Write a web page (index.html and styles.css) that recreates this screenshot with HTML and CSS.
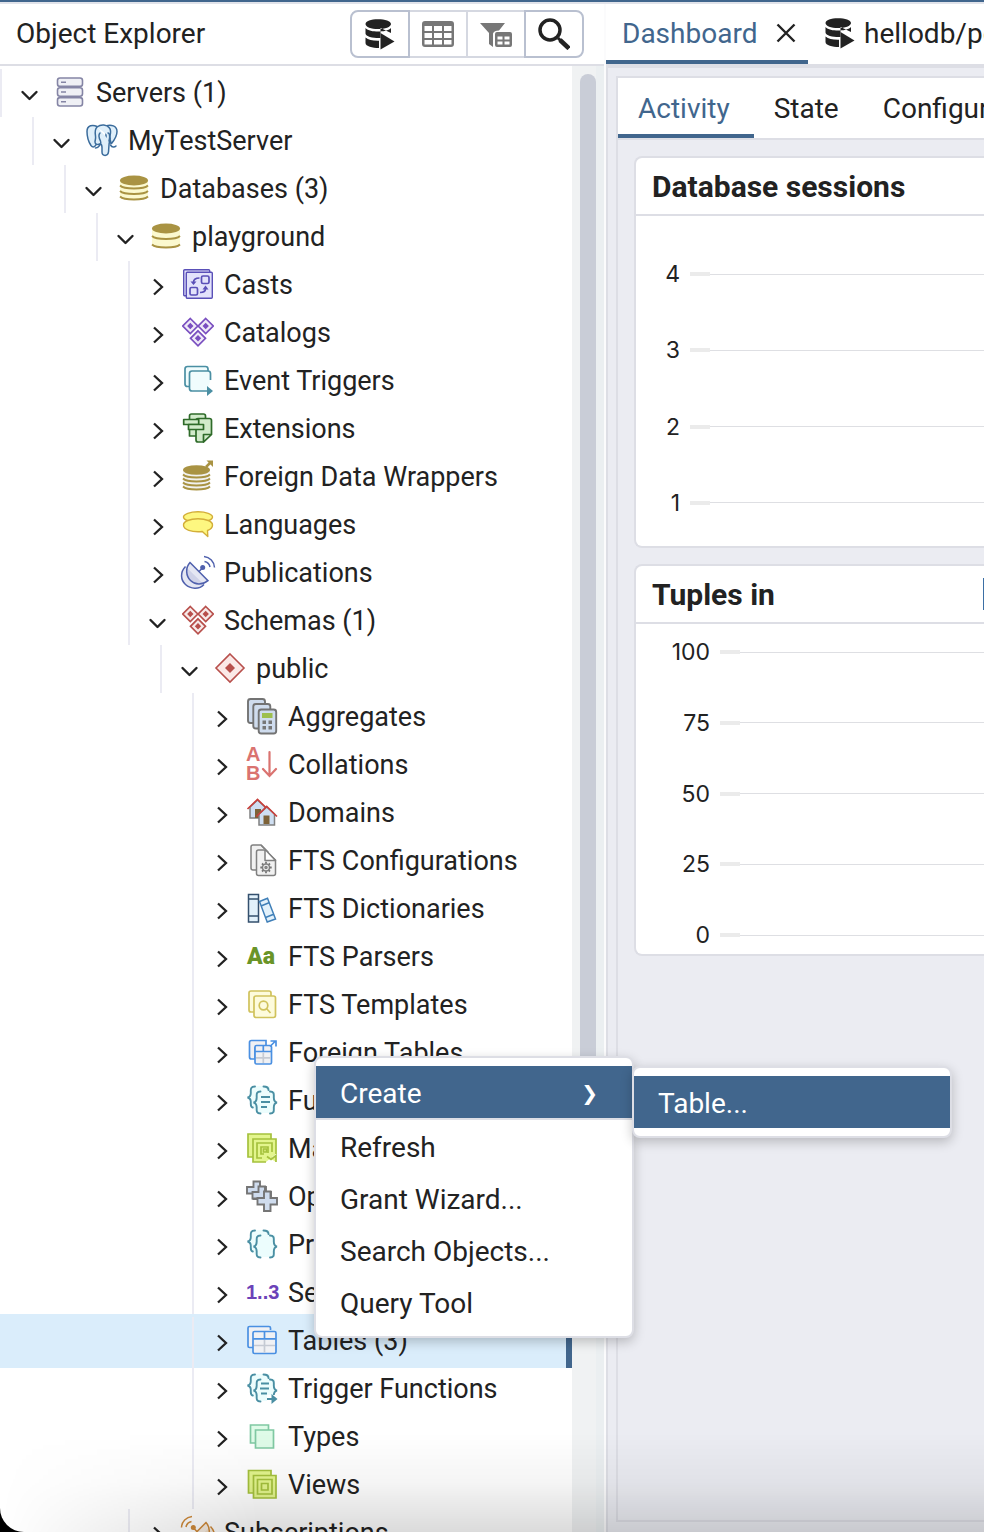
FILE: index.html
```html
<!DOCTYPE html>
<html lang="en">
<head>
<meta charset="utf-8">
<title>Object Explorer</title>
<link rel="stylesheet" href="styles.css">
</head>
<body>
<svg class="sprite" aria-hidden="true">
  <symbol id="open" viewBox="0 0 28 32"><path d="M6.500 16l7 7 7-7" fill="none" stroke="#222" stroke-width="2.400" stroke-linecap="round" stroke-linejoin="round"/></symbol>
  <symbol id="closed" viewBox="0 0 28 32"><path d="M10 11.500l8 7.500-8 7.500" fill="none" stroke="#222" stroke-width="2.300"/></symbol>
  <symbol id="diamonds" viewBox="0 0 32 32"><g stroke="currentColor" stroke-width="1.700"><path d="M8.300 2.500l7.500 7.500-7.500 7.500-7.500-7.500zM23.700 2.500l7.500 7.500-7.500 7.500-7.500-7.500zM16 14.800l7.500 7.500-7.500 7.500-7.500-7.500z" fill="currentColor" fill-opacity=".12"/></g><path d="M8.300 6.800l3.200 3.200-3.200 3.200-3.200-3.200zM23.700 6.800l3.200 3.200-3.200 3.200-3.200-3.200zM16 19.100l3.200 3.200-3.200 3.200-3.200-3.200z" fill="currentColor"/></symbol>
  <symbol id="dish" viewBox="0 0 32 32" overflow="visible"><g fill="none" stroke="currentColor" stroke-width="1.500"><path d="M3.500 10.500C-2 16-1.500 24 3.500 28.500S17 34 22 28.500" fill="currentColor" fill-opacity=".15"/><path d="M8 6.500L26 24.700C20 29.500 13 29 8.500 24.500S3 12 8 6.500z" fill="currentColor" fill-opacity=".15"/><path d="M17 15.500l4-4M22.500 5.500a7 7 0 0 1 5.500 5.500M22 .5a11.500 11.500 0 0 1 10.500 11"/></g><circle cx="20.700" cy="11.500" r="2.500" fill="currentColor"/></symbol>
  <symbol id="braces" viewBox="0 0 32 32"><g fill="#ecfdfd" stroke="none"><path d="M7 2h17v5h5v22H12L6 24 3 13z"/></g><g fill="none" stroke="#4a8fa3" stroke-width="1.900" stroke-linecap="round"><path d="M9 2.500C4 2.500 4.800 6 4.800 9S4 13 1.500 13.500c2.500.5 3.300 1.500 3.300 4.500s-.5 5 2 5.500M17.500 2.500c3.500 0 5 1.500 5 3.500M14.500 7.500c-4.500 0-3.800 3-3.800 6s-.7 4.500-3.200 5c2.500.5 3.200 2 3.200 5s-.7 6 3.800 6M24 7.500c4.500 0 3.800 3 3.800 6s.7 4.500 3.200 5c-2.500.5-3.200 2-3.200 5s.7 6-3.800 6"/></g></symbol>
  <symbol id="query" viewBox="0 0 32 32"><path fill="#222" d="M1.500 6C1.500 3 7 1.300 14 1.300S27 3 27 6s-6 5-13 5S1.500 9 1.500 6zM1.500 10c2.500 2.800 7.500 3.500 12.500 3.500S24.500 12.800 27 10v5l-10.500-5V20C10.500 20.300 1.500 19 1.500 15.500zM1.500 19.500c3 2.500 7 3.300 13.500 3.200V30C8.500 30 1.500 28.500 1.500 25z"/><path fill="#222" d="M16.500 15l14 8.500-14 8z"/></symbol>
</svg>

<div class="app">
  <div class="workspace">
    <aside class="explorer">
      <header class="explorer-head">
        <h1>Object Explorer</h1>
        <div class="tools">
          <button class="tool" aria-label="Query Tool"><svg viewBox="0 0 32 32"><use href="#query"/></svg></button>
          <button class="tool" disabled aria-label="View Data"><svg viewBox="0 0 32 32"><path fill="#777" fill-rule="evenodd" d="M3 3h26q3 0 3 3v20q0 3-3 3H3q-3 0-3-3V6q0-3 3-3zM2.500 8v5h7.500V8zM12 8v5h8V8zM22 8v5h7.500V8zM2.500 15v5h7.500v-5zM12 15v5h8v-5zM22 15v5h7.500v-5zM2.500 22v4.500h7.500V22zM12 22v4.500h8V22zM22 22v4.500h7.500V22z"/></svg></button>
          <button class="tool" disabled aria-label="Filtered Rows"><svg viewBox="0 0 32 32"><path fill="#777" d="M0 5h25l-6 7.500q-5 0-6 3V29l-4-3V15z"/><path fill="#777" fill-rule="evenodd" d="M17 14h13q2 0 2 2v11q0 2-2 2H17q-2 0-2-2V16q0-2 2-2zM17.500 18.500v3h5v-3zM24.500 18.500v3h5v-3zM17.500 23.500v3h5v-3zM24.500 23.500v3h5v-3z"/></svg></button>
          <button class="tool" aria-label="Search Objects"><svg viewBox="0 0 32 32"><g fill="none" stroke="#222"><circle cx="12" cy="12" r="10" stroke-width="3.500"/><path d="M20 20l2.500 2.500" stroke-width="3"/><path d="M22 22l9 8.500" stroke-width="4.500"/></g></svg></button>
        </div>
      </header>
      <div class="explorer-body">
        <ul class="tree">
          <li class="row l0"><div class="node"><button class="toggle" aria-label="Collapse"><svg><use href="#open"/></svg></button><svg class="icon" viewBox="0 0 32 32"><g fill="#eff0f5" stroke="#8585a5" stroke-width="1.600"><rect x="3.500" y="2" width="25" height="8.400" rx="2.500"/><rect x="3.500" y="11.800" width="25" height="8.400" rx="2.500"/><rect x="3.500" y="21.600" width="25" height="8.400" rx="2.500"/><path d="M7 6.200h5M7 16h5M7 25.800h5"/></g></svg><span>Servers (1)</span></div></li>
          <li class="row l1"><div class="node"><button class="toggle" aria-label="Collapse"><svg><use href="#open"/></svg></button><svg class="icon" viewBox="0 0 32 32"><g fill="#dfeffa" stroke="#3b6c9c" stroke-width="1.500" stroke-linejoin="round" stroke-linecap="round"><path d="M11 2.500C7 .5 1 1 1 7.500c0 5 2 11 4 14 1.500 2 3 2 4.500 0l2-3z"/><path d="M20 2c5-2 11 0 11 5.500 0 4-3 9-5.500 12L20 16z"/><path d="M11 3c4-3 10-2.500 12.500 1 1.500 2 1 6 .5 8-.5 3 .5 5 1 6.500M11 3c-2 2-2 6-1.500 9s-.5 4-.5 6 2 3 5 2c1 0 2 1 2 3.500V28c0 4.500 6 4.500 6.500 0l.5-7c0-4 2-5 1-8"/><path d="M14 9c-2 2-1 5 .5 8 1 2 0 3-1 4.500S10.500 24 9.500 24M22 9c2 0 2 5 1 8M24.500 21c1.500 2.500 4 2.500 5.500 1" fill="none"/></g></svg><span>MyTestServer</span></div></li>
          <li class="row l2"><div class="node"><button class="toggle" aria-label="Collapse"><svg><use href="#open"/></svg></button><svg class="icon" viewBox="0 0 32 32"><path d="M2 9v15.500c4 4.500 24 4.500 28 0V9z" fill="#fbf9cf"/><ellipse cx="16" cy="8.500" rx="14" ry="5" fill="#a99343"/><path d="M2 13.500c4 4 24 4 28 0M2 19c4 4 24 4 28 0M2 24.500c4 4 24 4 28 0" fill="none" stroke="#a99343" stroke-width="1.800"/></svg><span>Databases (3)</span></div></li>
          <li class="row l3"><div class="node"><button class="toggle" aria-label="Collapse"><svg><use href="#open"/></svg></button><svg class="icon" viewBox="0 0 32 32"><path d="M2 9v15.500c4 4.500 24 4.500 28 0V9z" fill="#fbf9cf"/><ellipse cx="16" cy="8.500" rx="14" ry="5" fill="#a99343"/><path d="M2 16c4 4 24 4 28 0M2 24.500c4 4 24 4 28 0" fill="none" stroke="#a99343" stroke-width="1.800"/></svg><span>playground</span></div></li>
          <li class="row l4"><div class="node"><button class="toggle" aria-label="Expand"><svg><use href="#closed"/></svg></button><svg class="icon" viewBox="0 0 32 32"><g fill="#e3e3fb" stroke="#5a50b8" stroke-width="1.400"><rect x="1.700" y="1.700" width="26" height="26" rx="1"/><rect x="4.300" y="4.300" width="26" height="26" rx="1"/><g stroke-width="1.700"><rect x="19.500" y="8" width="7.500" height="7.500" rx="1.500"/><rect x="8" y="19.500" width="7.500" height="7.500" rx="1.500"/><path d="M17.500 10c-4 0-6 1-6 4.500M18 24.500c4 0 5.500-1 5.500-4" fill="none"/></g></g><path d="M8.500 13.500h6l-3 3.500zM20.500 21.500h6l-3-4z" fill="#5a50b8"/></svg><span>Casts</span></div></li>
          <li class="row l4"><div class="node"><button class="toggle" aria-label="Expand"><svg><use href="#closed"/></svg></button><svg class="icon violet"><use href="#diamonds"/></svg><span>Catalogs</span></div></li>
          <li class="row l4"><div class="node"><button class="toggle" aria-label="Expand"><svg><use href="#closed"/></svg></button><svg class="icon" viewBox="0 0 32 32"><g fill="#f0fcfd" stroke="#4a8fa3" stroke-width="1.700"><path d="M7.500 22.500H5.500q-2.500 0-2.500-2.500V5q0-2.500 2.500-2.500h18q2.500 0 2.500 2.500v2"/><path d="M25 27H10q-2.500 0-2.500-2.500V9.500Q7.500 7 10 7h16q2.500 0 2.500 2.500V16"/></g><path d="M25 22l6 5-6 5z" fill="#4a8fa3"/></svg><span>Event Triggers</span></div></li>
          <li class="row l4"><div class="node"><button class="toggle" aria-label="Expand"><svg><use href="#closed"/></svg></button><svg class="icon" viewBox="0 0 32 32"><g fill="#d2ebcb" stroke="#2f6b2a" stroke-width="1.700" stroke-linejoin="round"><path d="M7.500 24V4q0-2 2-2h12q2 0 2 2v20z"/><path d="M14 28V8.500q0-2 2-2h11.500q2 0 2 2V22l-8 8H16q-2 0-2-2z"/><path d="M21.500 30v-7.500h8z"/><rect x="1.700" y="7.500" width="15" height="5"/><rect x="6.500" y="12.500" width="15" height="5"/></g></svg><span>Extensions</span></div></li>
          <li class="row l4"><div class="node"><button class="toggle" aria-label="Expand"><svg><use href="#closed"/></svg></button><svg class="icon" viewBox="0 0 32 32"><path d="M1 11v15c4 5 24 5 27 0V11z" fill="#f1f1ee"/><ellipse cx="14.500" cy="10" rx="13.500" ry="4.800" fill="#a99343"/><path d="M1 14.500c4 4 23 4 27 0M1 18.500c4 4 23 4 27 0M1 22.500c4 4 23 4 27 0M1 26.500c4 4 23 4 27 0" fill="none" stroke="#a99343" stroke-width="1.800"/><path d="M24 7l5-5" stroke="#a99343" stroke-width="2.500"/><path d="M24.500.5H31V7z" fill="#a99343"/></svg><span>Foreign Data Wrappers</span></div></li>
          <li class="row l4"><div class="node"><button class="toggle" aria-label="Expand"><svg><use href="#closed"/></svg></button><svg class="icon" viewBox="0 0 32 32"><g fill="#fdf780" stroke="#d3ae39" stroke-width="1.400" stroke-linejoin="round"><ellipse cx="16" cy="9" rx="14.500" ry="5.200"/><path d="M16 10.800c8 0 14.500 2.500 14.500 6.200 0 2.500-2 4.500-5 5.500l.3 6-5.500-5c-11 1-18.800-2-18.800-6.500 0-3.700 6.500-6.200 14.500-6.200z"/></g></svg><span>Languages</span></div></li>
          <li class="row l4"><div class="node"><button class="toggle" aria-label="Expand"><svg><use href="#closed"/></svg></button><svg class="icon indigo"><use href="#dish"/></svg><span>Publications</span></div></li>
          <li class="row l4"><div class="node"><button class="toggle" aria-label="Collapse"><svg><use href="#open"/></svg></button><svg class="icon red"><use href="#diamonds"/></svg><span>Schemas (1)</span></div></li>
          <li class="row l5"><div class="node"><button class="toggle" aria-label="Collapse"><svg><use href="#open"/></svg></button><svg class="icon" viewBox="0 0 32 32"><path d="M16 2l14 14-14 14L2 16z" fill="#fbe9e7" stroke="#b8504c" stroke-width="1.600"/><path d="M16 11l5 5-5 5-5-5z" fill="#b8504c"/></svg><span>public</span></div></li>
          <li class="row l6"><div class="node"><button class="toggle" aria-label="Expand"><svg><use href="#closed"/></svg></button><svg class="icon" viewBox="0 0 32 32"><g fill="#cfdcee" stroke="#737373" stroke-width="1.900"><rect x="2" y="-1" width="17" height="24" rx="2.500"/><rect x="7.300" y="4" width="17" height="24.500" rx="2.500"/><rect x="12.700" y="9.500" width="17.500" height="24" rx="2.500"/></g><path d="M16 13h10.500v5H16z" fill="#9dbf4f"/><path d="M16.500 20.500h3.500v3.500h-3.500zM22.500 20.500H26v3.500h-3.500zM16.500 26h3.500v3.500h-3.500zM22.500 26H26v3.500h-3.500z" fill="#777"/></svg><span>Aggregates</span></div></li>
          <li class="row l6"><div class="node"><button class="toggle" aria-label="Expand"><svg><use href="#closed"/></svg></button><svg class="icon" viewBox="0 0 32 32"><g fill="#da7370"><text x="0" y="13" class="glyph-ab">A</text><text x="0" y="32" class="glyph-ab">B</text></g><path d="M23.500 4v23M17 21l6.500 7 6.500-7" fill="none" stroke="#da7370" stroke-width="2.200" stroke-linecap="round"/></svg><span>Collations</span></div></li>
          <li class="row l6"><div class="node"><button class="toggle" aria-label="Expand"><svg><use href="#closed"/></svg></button><svg class="icon" viewBox="0 0 32 32"><g fill="#cfdff2" stroke="#808080" stroke-width="1.500"><path d="M4 22V11l7.500-7L19 11v11z"/></g><path d="M9 13h6v9H9z" fill="#7d6238"/><path d="M1.500 13l10-9.500 10 9.500" fill="none" stroke="#c9403c" stroke-width="1.700"/><path d="M13 29V18l7.800-7 7.700 7v11z" fill="#cfdff2" stroke="#808080" stroke-width="1.500"/><path d="M17.500 19.500h6V28h-6z" fill="#7d6238"/><path d="M10.500 20.500l10.200-10 10.300 10" fill="none" stroke="#c9403c" stroke-width="1.700"/></svg><span>Domains</span></div></li>
          <li class="row l6"><div class="node"><button class="toggle" aria-label="Expand"><svg><use href="#closed"/></svg></button><svg class="icon" viewBox="0 0 32 32"><g fill="#f1f1f1" stroke="#808080" stroke-width="1.500" stroke-linejoin="round"><path d="M5 24V3q0-2 2-2h8l7 7v18H7q-2 0-2-2z"/><path d="M10.500 29V8q0-2 2-2H19l10.500 10v13.500q0 2-2 2h-15q-2 0-2-2z"/><path d="M15 1l14.500 15.500H19V6" fill="#fff"/><circle cx="20" cy="23.500" r="3.500"/><circle cx="20" cy="23.500" r="1"/></g><path d="M20 17.800v2M20 27.200v2M14.300 23.500h2M23.700 23.500h2M16 19.500l1.400 1.400M22.600 26.100l1.400 1.400M24 19.500l-1.400 1.400M17.400 26.100L16 27.500" stroke="#777" stroke-width="1.800"/></svg><span>FTS Configurations</span></div></li>
          <li class="row l6"><div class="node"><button class="toggle" aria-label="Expand"><svg><use href="#closed"/></svg></button><svg class="icon" viewBox="0 0 32 32"><g fill="#e2f1fb" stroke-width="1.500"><path d="M2.500 2.500h10v27.500h-10zM2.500 7h10M2.500 24h10" stroke="#34506e"/><path d="M13.500 9.500l8-3.300 8 20.800-8.300 3zM15 14l8-3.200M19.500 25.500l8.200-3.300" stroke="#3f7fb8"/></g></svg><span>FTS Dictionaries</span></div></li>
          <li class="row l6"><div class="node"><button class="toggle" aria-label="Expand"><svg><use href="#closed"/></svg></button><svg class="icon" viewBox="0 0 32 32"><text x="1" y="24" class="glyph-aa">Aa</text></svg><span>FTS Parsers</span></div></li>
          <li class="row l6"><div class="node"><button class="toggle" aria-label="Expand"><svg><use href="#closed"/></svg></button><svg class="icon" viewBox="0 0 32 32"><g fill="#fdfbdc" stroke="#d0c25c" stroke-width="1.700"><rect x="3" y="3" width="22" height="21" rx="2"/><rect x="8" y="8" width="21.500" height="21.500" rx="2"/><circle cx="17.500" cy="17.500" r="4.300"/><path d="M20.500 20.500l4 4.500"/></g></svg><span>FTS Templates</span></div></li>
          <li class="row l6"><div class="node"><button class="toggle" aria-label="Expand"><svg><use href="#closed"/></svg></button><svg class="icon" viewBox="0 0 32 32"><g fill="#f0f1f4" stroke="#4a90e2" stroke-width="1.700"><path d="M20 4.500H5.500q-2 0-2 2v14.500q0 2 2 2H9V12h11z"/><rect x="9" y="9.500" width="16.500" height="18.500" rx="1.500"/><path d="M9 15.500h16.500M17.300 10v6"/><path d="M10 21.800h14.500M17.300 16.500V27" stroke="#c5cad3"/><path d="M24 10.500l5-5M24.500 5h5.500v5.500" fill="none"/></g></svg><span>Foreign Tables</span></div></li>
          <li class="row l6"><div class="node"><button class="toggle" aria-label="Expand"><svg><use href="#closed"/></svg></button><svg class="icon" viewBox="0 0 32 32"><use href="#braces"/><path d="M15 13h9M15 18h9M15 23h6" stroke="#4a8fa3" stroke-width="1.800"/></svg><span>Functions</span></div></li>
          <li class="row l6"><div class="node"><button class="toggle" aria-label="Expand"><svg><use href="#closed"/></svg></button><svg class="icon" viewBox="0 0 32 32"><g fill="#e3f58d" stroke="#a5c13d" stroke-width="1.700"><path d="M2 2h23v23H2z"/><path d="M30 22V7H7v23h13"/><path d="M26 20v-9H11v15h5"/><path d="M22 21v-6h-7v7h3"/><path d="M17.500 17h3v3h-3z"/><path d="M21 24.500l4 3 5-4v6.500"/></g></svg><span>Materialized Views</span></div></li>
          <li class="row l6"><div class="node"><button class="toggle" aria-label="Expand"><svg><use href="#closed"/></svg></button><svg class="icon" viewBox="0 0 32 32"><g fill="#cfdcee" stroke="#757575" stroke-width="1.900"><path d="M7.500 1.500h6.500v5.500h6v6.500h-6V19H7.500v-5.500H1V7h6.500z"/><path d="M12.500 6.500H19V12h6v6.500h-6V24h-6.500v-5.500H6.500V12h6z"/><path d="M18 11.500h6.500V18H31v6.500h-6.500v6.500H18v-6.500h-6.500V18H18z"/></g></svg><span>Operators</span></div></li>
          <li class="row l6"><div class="node"><button class="toggle" aria-label="Expand"><svg><use href="#closed"/></svg></button><svg class="icon"><use href="#braces"/></svg><span>Procedures</span></div></li>
          <li class="row l6"><div class="node"><button class="toggle" aria-label="Expand"><svg><use href="#closed"/></svg></button><svg class="icon" viewBox="0 0 32 32"><text x="0" y="23" class="glyph-seq">1..3</text></svg><span>Sequences</span></div></li>
          <li class="row l6 selected"><div class="node"><button class="toggle" aria-label="Expand"><svg><use href="#closed"/></svg></button><svg class="icon" viewBox="0 0 32 32"><g fill="#f0f1f4" stroke="#4a90e2" stroke-width="1.700"><path d="M24.500 6V4q0-1.500-1.500-1.500H3.500Q2 2.500 2 4v18q0 1.500 1.500 1.500H7"/><rect x="7" y="7.500" width="23" height="22" rx="1.500"/><path d="M7 14.800h23M18.500 7.500v7"/><path d="M8 21.500h21M18.500 16v12.500" stroke="#c5cad3"/></g></svg><span>Tables (3)</span></div></li>
          <li class="row l6"><div class="node"><button class="toggle" aria-label="Expand"><svg><use href="#closed"/></svg></button><svg class="icon" viewBox="0 0 32 32"><use href="#braces"/><path d="M21 23h11v9H21z" fill="#fff"/><path d="M15 11.500h8M14 16.500h9M15 21.500h6M21 27h5" stroke="#4a8fa3" stroke-width="1.800"/><path d="M25.500 22l6 5-6 5z" fill="#4a8fa3"/></svg><span>Trigger Functions</span></div></li>
          <li class="row l6"><div class="node"><button class="toggle" aria-label="Expand"><svg><use href="#closed"/></svg></button><svg class="icon" viewBox="0 0 32 32"><g fill="#dffbe8" stroke="#80c9a3" stroke-width="1.700"><path d="M4.500 5h18v18h-18z"/><path d="M9.500 10h18v18h-18z"/></g></svg><span>Types</span></div></li>
          <li class="row l6"><div class="node"><button class="toggle" aria-label="Expand"><svg><use href="#closed"/></svg></button><svg class="icon" viewBox="0 0 32 32"><g fill="#e3f58d" stroke="#a5c13d" stroke-width="1.700"><path d="M2.500 2.500h22.500v22.500H2.500z"/><path d="M7.500 7.500H30V30H7.500z"/><path d="M11.500 11.500H26V26H11.500z"/><path d="M15.500 15.500H22V22h-6.500z"/></g></svg><span>Views</span></div></li>
          <li class="row l4"><div class="node"><button class="toggle" aria-label="Expand"><svg><use href="#closed"/></svg></button><svg class="icon orange flipped"><use href="#dish"/></svg><span>Subscriptions</span></div></li>
        </ul>
        <div class="scrollbar"><div class="thumb"></div></div>
      </div>
    </aside>

    <main class="main">
      <nav class="tabs">
        <a class="tab active" href="#dashboard">Dashboard <svg class="close" viewBox="0 0 20 20"><path d="M1.500 1.500l17 17M18.500 1.500l-17 17" stroke="#222" stroke-width="2.400"/></svg></a>
        <a class="tab" href="#query-tool"><svg class="tab-icon"><use href="#query"/></svg>hellodb/postgres</a>
      </nav>
      <div class="dock">
        <section class="dashboard">
          <nav class="subtabs">
            <a class="subtab active" href="#activity">Activity</a>
            <a class="subtab" href="#state">State</a>
            <a class="subtab" href="#configuration">Configuration</a>
          </nav>
          <div class="cards">
            <article class="card">
              <h2>Database sessions</h2>
              <div class="chart sessions">
                <div class="grid-line"><span>4</span></div>
                <div class="grid-line"><span>3</span></div>
                <div class="grid-line"><span>2</span></div>
                <div class="grid-line"><span>1</span></div>
              </div>
            </article>
            <article class="card">
              <h2>Tuples in<i class="swatch"></i></h2>
              <div class="chart tuples">
                <div class="grid-line"><span>100</span></div>
                <div class="grid-line"><span>75</span></div>
                <div class="grid-line"><span>50</span></div>
                <div class="grid-line"><span>25</span></div>
                <div class="grid-line"><span>0</span></div>
              </div>
            </article>
          </div>
        </section>
      </div>
    </main>
  </div>

  <div class="shade"></div>

  <div class="menu" role="menu">
    <button class="item highlighted" role="menuitem">Create<span class="arrow">❯</span></button>
    <button class="item" role="menuitem">Refresh</button>
    <button class="item" role="menuitem">Grant Wizard...</button>
    <button class="item" role="menuitem">Search Objects...</button>
    <button class="item" role="menuitem">Query Tool</button>
  </div>
  <div class="menu submenu" role="menu">
    <button class="item highlighted" role="menuitem">Table...</button>
  </div>
</div>
</body>
</html>
```
FILE: styles.css
```css
:root {
  --blue: #41668d;
  --line: #dddee5;
  --panel: #ebecf2;
  --text: #222;
}

* { box-sizing: border-box; }

html { background: #000; }

body {
  margin: 0;
  font-family: Roboto, "Liberation Sans", sans-serif;
  font-size: 28px;
  color: var(--text);
}

button {
  font: inherit;
  color: inherit;
  background: none;
  border: 0;
  padding: 0;
}

a { color: inherit; text-decoration: none; }

.sprite { position: absolute; width: 0; height: 0; }

.app {
  position: relative;
  height: 100vh;
  overflow: hidden;
  background: #fff;
  border-top: 2px solid var(--blue);
  border-bottom-left-radius: 24px;
}

.workspace {
  display: flex;
  height: 100%;
  border-top: 2px solid #e1e3ea;
}

/* Object explorer */
.explorer {
  flex: 0 0 606px;
  display: flex;
  flex-direction: column;
  min-height: 0;
  border-right: 2px solid #fbfbfc;
}

.explorer-head {
  flex: none;
  display: flex;
  align-items: center;
  justify-content: space-between;
  height: 62px;
  padding: 0 20px 0 16px;
  border-bottom: 2px solid var(--line);
}

.explorer-head h1 {
  margin: 0;
  padding-bottom: 2px;
  font-size: 28px;
  font-weight: 400;
}

.tools { display: flex; }

.tool {
  position: relative;
  display: flex;
  align-items: center;
  justify-content: center;
  width: 60px;
  height: 48px;
  border: 2px solid #d5d8e1;
}

.tool + .tool { margin-left: -2px; }
.tool:enabled { z-index: 1; border-color: #b9c0d0; }
.tool:first-child { border-radius: 8px 0 0 8px; }
.tool:last-child { border-radius: 0 8px 8px 0; }
.tool svg { width: 32px; height: 32px; }

.explorer-body {
  flex: 1;
  display: flex;
  min-height: 0;
  overflow: hidden;
}

.tree {
  flex: 1;
  margin: 0;
  padding: 3px 0 0;
  list-style: none;
  font-size: 27px;
}

.row { line-height: 32px; }
.l1 { padding-left: 32px; }
.l2 { padding-left: 64px; }
.l3 { padding-left: 96px; }
.l4 { padding-left: 128px; }
.l5 { padding-left: 160px; }
.l6 { padding-left: 192px; }

.node {
  display: flex;
  align-items: center;
  height: 48px;
  padding: 0 0 2px 14px;
  border-left: 2px solid #ebebf3;
  white-space: nowrap;
}

.node span { padding-top: 2px; }

.selected {
  margin: -3px 0;
  padding-top: 3px;
  padding-bottom: 3px;
  background: #daedfb;
  border-right: 6px solid var(--blue);
}

.toggle { width: 28px; height: 32px; }
.toggle svg { display: block; width: 28px; height: 32px; }

.icon {
  flex: none;
  width: 32px;
  height: 32px;
  margin: 0 10px;
  overflow: visible;
}

.violet { color: #7a4fc0; }
.red { color: #b8504c; }
.indigo { color: #4f60ad; }
.orange { color: #cf8a3a; }
.flipped { transform: scaleX(-1); }

.glyph-ab { font-family: "Liberation Sans", sans-serif; font-size: 20px; font-weight: 700; }
.glyph-aa { font-size: 23px; font-weight: 900; fill: #6a9428; }
.glyph-seq { font-family: "Liberation Sans", sans-serif; font-size: 20px; font-weight: 700; fill: #6b42b8; }

.scrollbar {
  flex: 0 0 32px;
  padding: 8px 8px 0;
  background: linear-gradient(to right, #f0f2f3 24px, #ebeff1 24px);
}

.thumb {
  height: 1100px;
  border-radius: 8px;
  background: #c9cdd7;
}

/* Main area */
.main {
  flex: 1;
  display: flex;
  flex-direction: column;
  min-width: 0;
}

.tabs {
  flex: none;
  display: flex;
  height: 64px;
  border-bottom: 4px solid var(--line);
  overflow: hidden;
}

.tab {
  flex: none;
  display: flex;
  align-items: center;
  padding: 2px 16px 0;
  border-bottom: 4px solid transparent;
}

.tab.active,
.subtab.active {
  color: var(--blue);
  border-bottom-color: var(--blue);
}

.tab.active { width: 202px; justify-content: space-between; padding-right: 12px; }
.close { width: 20px; height: 20px; }
.tab-icon { width: 32px; height: 32px; margin-right: 8px; }

.dock {
  flex: 1;
  min-height: 0;
  padding: 8px 0 10px 8px;
  background: var(--panel);
  border-left: 2px solid var(--line);
}

.dashboard {
  height: 100%;
  border: 2px solid var(--line);
  border-right: 0;
}

.subtabs {
  display: flex;
  height: 62px;
  background: #fff;
  border-bottom: 2px solid var(--line);
  overflow: hidden;
}

.subtab {
  display: flex;
  align-items: center;
  padding: 4px 24px 0 20px;
  border-bottom: 4px solid transparent;
}

.cards {
  display: flex;
  flex-direction: column;
  gap: 16px;
  padding: 16px 0 0 16px;
}

.card {
  display: flex;
  flex-direction: column;
  height: 392px;
  overflow: hidden;
  background: #fff;
  border: 2px solid var(--line);
  border-right: 0;
  border-radius: 8px 0 0 8px;
}

.card h2 {
  display: flex;
  align-items: center;
  justify-content: space-between;
  height: 58px;
  margin: 0;
  padding-left: 16px;
  border-bottom: 2px solid var(--line);
  font-size: 30px;
  font-weight: 700;
}

.swatch {
  width: 32px;
  height: 32px;
  margin-right: -31px;
  background: #3b6fa5;
}

.chart {
  flex: 1;
  display: flex;
  flex-direction: column;
  justify-content: space-between;
  font-family: Inter, sans-serif;
  font-size: 23px;
}

.sessions { padding: 44px 0 29px; }
.tuples { padding: 14px 0 5px; }

.grid-line {
  display: flex;
  align-items: center;
  height: 28px;
  line-height: 28px;
}

.grid-line span { width: 44px; margin-right: 10px; text-align: right; }
.tuples span { width: 74px; }
.grid-line::before { order: 1; content: ""; width: 20px; height: 4px; background: #ebebeb; }
.grid-line::after { order: 2; content: ""; flex: 1; height: 1px; background: #dedfe3; }

/* Soft darkening along the bottom edge of the window */
.shade {
  position: absolute;
  left: 0;
  right: 0;
  bottom: 0;
  height: 100px;
  pointer-events: none;
  background: linear-gradient(rgba(0, 0, 0, 0), rgba(0, 0, 0, .04) 50%, rgba(0, 0, 0, .14));
  mask-image: linear-gradient(to right, transparent, #000 260px);
}

/* Context menus */
.menu {
  position: absolute;
  left: 314px;
  top: 1054px;
  width: 320px;
  padding: 8px 0;
  background: #fff;
  border: 2px solid var(--line);
  border-radius: 8px;
  box-shadow: 0 4px 12px rgba(0, 0, 0, .22);
}

.submenu { left: 632px; top: 1064px; }

.item {
  display: flex;
  align-items: center;
  justify-content: space-between;
  width: 100%;
  height: 52px;
  padding: 2px 34px 0 24px;
}

.item.highlighted { color: #fff; background: var(--blue); }
.item.highlighted:not(:last-child) { height: 54px; border-bottom: 2px solid var(--line); }
.arrow { font-family: "DejaVu Sans", sans-serif; font-size: 20px; }
```
